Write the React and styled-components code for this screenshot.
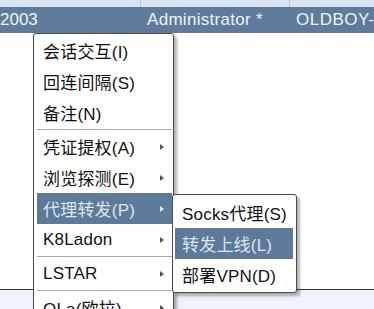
import React from 'react';
import styled, { createGlobalStyle } from "styled-components";

const GlobalStyle = createGlobalStyle`
  html, body {
    margin: 0;
    padding: 0;
    background: #ffffff;
    overflow: hidden;
  }
  body {
    width: 374px;
    height: 309px;
    font-family: "Liberation Sans", "Noto Sans CJK SC", sans-serif;
  }
`

const StyledPage = styled.div`
  position: relative;
  width: 374px;
  height: 309px;
  display: flex;
  flex-direction: column;
  overflow: hidden;
`

const StyledHeader = styled.div`
  display: grid;
  grid-template-columns: 141px 149px 1fr;
  height: 7px;
  background: #d9e4f2;
`

const StyledHeaderCell = styled.div`
  border-right: 1px solid #b7c7db;
`

const StyledRow = styled.div`
  display: grid;
  grid-template-columns: 141px 149px 1fr;
  height: 26px;
  background: #5e7b9b;
  color: #f0f3f7;
  font-size: 17px;
  line-height: 26px;
  white-space: nowrap;
`

const StyledCell = styled.div`
  padding-left: ${props => props.pad || 0}px;
  letter-spacing: ${props => props.spacing || 0}px;
  overflow: hidden;
`

const StyledBlank = styled.div`
  height: 256px;
  background: #ffffff;
  border-bottom: 1px solid #3a3a3a;
`

const StyledFooter = styled.div`
  flex-grow: 1;
  background: #eef2fa;
`

const StyledMenu = styled.div`
  position: absolute;
  left: ${props => props.left}px;
  top: ${props => props.top}px;
  width: ${props => props.width}px;
  box-sizing: border-box;
  padding: ${props => props.padding};
  background: #ffffff;
  border: 1px solid #4a4a4a;
  border-radius: 3px;
  box-shadow: 3px 3px 3px rgba(0, 0, 0, 0.3);
  display: flex;
  flex-direction: column;
`

const StyledItem = styled.div`
  display: flex;
  align-items: center;
  justify-content: space-between;
  height: 31px;
  padding: 0 8px 0 ${props => props.indent}px;
  font-size: 17px;
  letter-spacing: 0.2px;
  white-space: nowrap;
  background: ${props => props.active ? "#5d7a9a" : "transparent"};
  color: ${props => props.active ? "#dfe5ec" : "#111111"};
`

const StyledArrow = styled.span`
  width: 0;
  height: 0;
  border-top: 3.5px solid transparent;
  border-bottom: 3.5px solid transparent;
  border-left: 4px solid ${props => props.active ? "#e6ebf0" : "#555555"};
`

const StyledSeparator = styled.div`
  height: 3px;
  display: flex;
  align-items: center;

  &::before {
    content: "";
    flex-grow: 1;
    height: 1px;
    background: #a9a9a9;
  }
`

const mainItems = [
  { label: "会话交互(I)" },
  { label: "回连间隔(S)" },
  { label: "备注(N)" },
  { separator: true },
  { label: "凭证提权(A)", sub: true },
  { label: "浏览探测(E)", sub: true },
  { label: "代理转发(P)", sub: true, active: true },
  { label: "K8Ladon", sub: true },
  { separator: true },
  { label: "LSTAR", sub: true },
  { separator: true },
  { label: "OLa(欧拉)", sub: true },
]

const subItems = [
  { label: "Socks代理(S)" },
  { label: "转发上线(L)", active: true },
  { label: "部署VPN(D)" },
]

const App = () => {
  return (
    <>
      <GlobalStyle />
      <StyledPage>
        <StyledHeader>
          <StyledHeaderCell />
          <StyledHeaderCell />
          <div />
        </StyledHeader>
        <StyledRow>
          <StyledCell>2003</StyledCell>
          <StyledCell pad={6} spacing={0.3}>Administrator *</StyledCell>
          <StyledCell pad={6} spacing={0.5}>OLDBOY-PC</StyledCell>
        </StyledRow>
        <StyledBlank />
        <StyledFooter />

        <StyledMenu left={33} top={33} width={141} padding="1px 1px 1px 3px">
          {mainItems.map((item, i) =>
            item.separator ? (
              <StyledSeparator key={i} />
            ) : (
              <StyledItem key={i} indent={6} active={item.active}>
                <span>{item.label}</span>
                {item.sub && <StyledArrow active={item.active} />}
              </StyledItem>
            )
          )}
        </StyledMenu>

        <StyledMenu left={172} top={194} width={125} padding="2px 3px 2px 2px">
          {subItems.map((item, i) => (
            <StyledItem key={i} indent={7} active={item.active}>
              <span>{item.label}</span>
            </StyledItem>
          ))}
        </StyledMenu>
      </StyledPage>
    </>
  )
}

export default App;
